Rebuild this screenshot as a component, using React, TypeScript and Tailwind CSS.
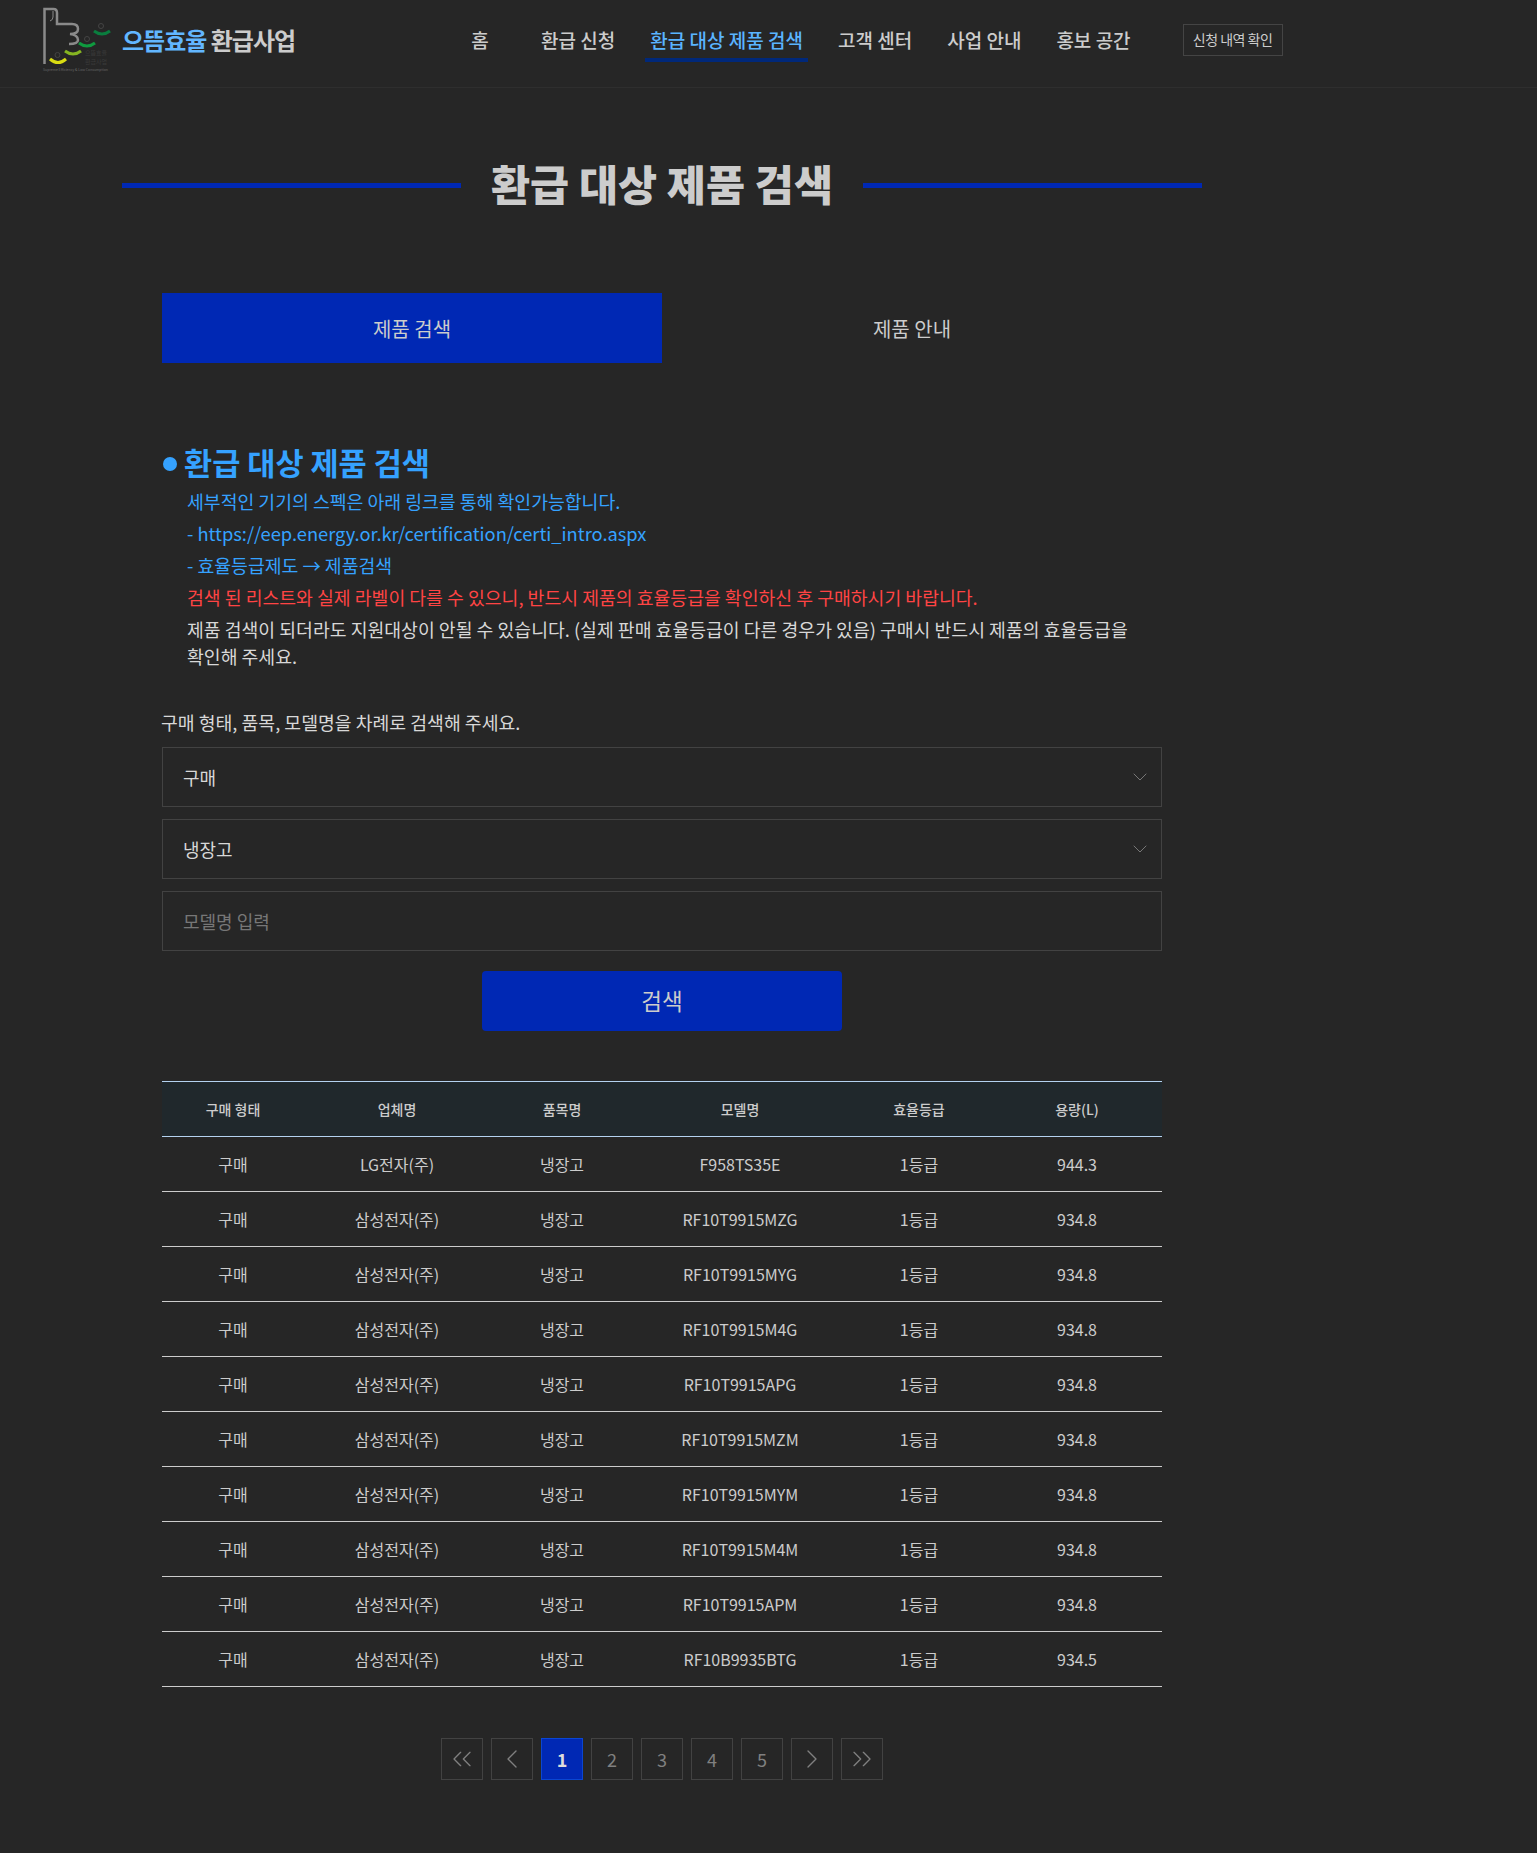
import React from 'react';
import { ChevronDown, ChevronLeft, ChevronRight, ChevronsLeft, ChevronsRight } from 'lucide-react';

const navItems = ['환급 신청', '환급 대상 제품 검색', '고객 센터', '사업 안내', '홍보 공간'];

const rows = [
  ['LG전자(주)', 'F958TS35E', '944.3'],
  ['삼성전자(주)', 'RF10T9915MZG', '934.8'],
  ['삼성전자(주)', 'RF10T9915MYG', '934.8'],
  ['삼성전자(주)', 'RF10T9915M4G', '934.8'],
  ['삼성전자(주)', 'RF10T9915APG', '934.8'],
  ['삼성전자(주)', 'RF10T9915MZM', '934.8'],
  ['삼성전자(주)', 'RF10T9915MYM', '934.8'],
  ['삼성전자(주)', 'RF10T9915M4M', '934.8'],
  ['삼성전자(주)', 'RF10T9915APM', '934.8'],
  ['삼성전자(주)', 'RF10B9935BTG', '934.5'],
];

const Logo = () => (
  <svg width="72" height="68" viewBox="40 6 72 68" fill="none" className="shrink-0">
    <path d="M43.500 64V9h9q3.500 0 3.500 4v11h15q6 0 6 5 0 5-8 5 8 1 8 6 0 4-9 4" stroke="#8a8a8a" strokeWidth="2.500" />
    <path d="M52 11v6q0 3-3 4" stroke="#8a8a8a" strokeWidth="1" />
    <path d="M49 59q8 7 16 0" stroke="#d9dc12" strokeWidth="3" />
    <path d="M64 51q8 6 16 0" stroke="#86b522" strokeWidth="3" />
    <path d="M78 43q8 6 16 0" stroke="#0f9a3f" strokeWidth="3" />
    <path d="M93 31q8 6 16 0" stroke="#0a7d3e" strokeWidth="3" />
    <circle cx="56.500" cy="55" r="2.500" stroke="#444" />
    <circle cx="86" cy="39" r="2.500" stroke="#444" />
    <circle cx="100" cy="26" r="2.500" stroke="#444" />
    <text x="84" y="55" fontSize="6" fill="#3a3a3a">으뜸효율</text>
    <text x="84" y="64" fontSize="6" fill="#3a3a3a">환급사업</text>
    <text x="42" y="71" fontSize="3.500" fill="#666">Supreme Efficiency &amp; Low Consumption</text>
  </svg>
);

const SelectBox = ({ label }: { label: string }) => (
  <div className="relative h-[60px] border border-[#424242] flex items-center pl-5 text-[18px] text-[#d8d8d8]">
    {label}
    <ChevronDown className="absolute right-[9px] top-[17px] text-[#777]" size={24} strokeWidth={1} />
  </div>
);

const PageBtn = ({ children, active }: { children: React.ReactNode; active?: boolean }) => (
  <button
    className={
      active
        ? 'w-[42px] h-[42px] flex items-center justify-center border border-[#0a46d2] bg-[#0028b4] text-[#dcdcdc] text-[18px] font-bold'
        : 'w-[42px] h-[42px] flex items-center justify-center border border-[#424242] text-[#808080] text-[18px]'
    }
  >
    {children}
  </button>
);

export default function App() {
  return (
    <div className="bg-[#262626] min-h-[1853px] font-['Noto_Sans_CJK_KR','Noto_Sans',sans-serif] text-[#cccccc]">
      <header className="h-[88px] pb-2 border-b border-[#2e2e2e] flex items-center">
        <div className="ml-[41px] flex items-center">
          <Logo />
          <span className="ml-[9px] text-[24px] font-bold tracking-[-1px]">
            <span className="text-[#62b6ff]">으뜸효율</span> 환급사업
          </span>
        </div>
        <nav className="ml-[154px] flex items-center gap-[25px] text-[19px] font-medium">
          <a className="w-[62px] text-center h-[44px] leading-[44px]">홈</a>
          {navItems.map((item, i) => (
            <a
              key={item}
              className={
                i === 1
                  ? 'px-[5px] h-[44px] leading-[44px] border-b-[4px] border-[#00287a] text-[#5ab4ff]'
                  : 'px-[5px] h-[44px] leading-[44px] border-b-[4px] border-transparent'
              }
            >
              {item}
            </a>
          ))}
        </nav>
        <button className="ml-[47px] w-[100px] h-8 border border-[#444444] text-[14px] tracking-[-0.5px]">신청 내역 확인</button>
      </header>

      <main className="w-[1324px]">
        <div className="mt-[67px] mx-auto w-[1080px] flex items-center gap-[30px]">
          <div className="flex-1 h-[5px] bg-[#0028b4]" />
          <h1 className="text-[42.5px] leading-[60px] -mt-[2px] mb-[2px] font-black">환급 대상 제품 검색</h1>
          <div className="flex-1 h-[5px] bg-[#0028b4]" />
        </div>

        <div className="mx-auto w-[1000px]">
          <div className="mt-[78px] grid grid-cols-2 h-[70px] text-[20px]">
            <div className="bg-[#0028b4] flex items-center justify-center pt-[2px]">제품 검색</div>
            <div className="flex items-center justify-center pt-[2px]">제품 안내</div>
          </div>

          <h2 className="mt-[81px] flex items-center text-[30.6px] leading-[40px] font-bold text-[#35a2ff]">
            <span className="w-[14px] h-[14px] rounded-full bg-[#35a2ff] mr-[7px] ml-px" />
            <span className="-mt-[2px] mb-[2px]">환급 대상 제품 검색</span>
          </h2>

          <div className="mt-1 pl-[25px] text-[18.3px] leading-[27px] break-keep">
            <p className="mb-[5px] text-[#35a2ff]">세부적인 기기의 스펙은 아래 링크를 통해 확인가능합니다.</p>
            <p className="mb-[5px] text-[#35a2ff]">- https://eep.energy.or.kr/certification/certi_intro.aspx</p>
            <p className="mb-[5px] text-[#35a2ff]">- 효율등급제도 → 제품검색</p>
            <p className="mb-[5px] text-[#ff4444]">검색 된 리스트와 실제 라벨이 다를 수 있으니, 반드시 제품의 효율등급을 확인하신 후 구매하시기 바랍니다.</p>
            <p className="text-[#d8d8d8]">제품 검색이 되더라도 지원대상이 안될 수 있습니다. (실제 판매 효율등급이 다른 경우가 있음) 구매시 반드시 제품의 효율등급을 확인해 주세요.</p>
          </div>

          <p className="mt-[39px] -ml-px text-[18.3px] leading-[27px] text-[#d8d8d8]">구매 형태, 품목, 모델명을 차례로 검색해 주세요.</p>

          <div className="mt-[11px] flex flex-col gap-3">
            <SelectBox label="구매" />
            <SelectBox label="냉장고" />
            <input
              placeholder="모델명 입력"
              className="h-[60px] border border-[#424242] pl-5 text-[18px] bg-transparent outline-none placeholder:text-[#777]"
            />
          </div>

          <button className="block mx-auto mt-5 w-[360px] h-[60px] rounded bg-[#0028b4] text-[22.5px]">검색</button>

          <table className="mt-[50px] w-full table-fixed border-collapse text-center">
            <colgroup>
              <col className="w-[142px]" />
              <col className="w-[186px]" />
              <col className="w-[144px]" />
              <col className="w-[212px]" />
              <col className="w-[146px]" />
              <col className="w-[170px]" />
            </colgroup>
            <thead>
              <tr className="h-[55px] bg-[#20282c] border-y border-[#b4d2f0] text-[14px]">
                <th className="font-medium">구매 형태</th>
                <th className="font-medium">업체명</th>
                <th className="font-medium">품목명</th>
                <th className="font-medium">모델명</th>
                <th className="font-medium">효율등급</th>
                <th className="font-medium">용량(L)</th>
              </tr>
            </thead>
            <tbody className="text-[16px]">
              {rows.map((r) => (
                <tr key={r[1]} className="h-[55px] border-b border-[#cccccc]">
                  <td>구매</td>
                  <td>{r[0]}</td>
                  <td>냉장고</td>
                  <td>{r[1]}</td>
                  <td>1등급</td>
                  <td>{r[2]}</td>
                </tr>
              ))}
            </tbody>
          </table>

          <div className="mt-[51px] flex justify-center gap-2">
            <PageBtn><ChevronsLeft size={32} strokeWidth={1} /></PageBtn>
            <PageBtn><ChevronLeft size={32} strokeWidth={1} /></PageBtn>
            <PageBtn active>1</PageBtn>
            <PageBtn>2</PageBtn>
            <PageBtn>3</PageBtn>
            <PageBtn>4</PageBtn>
            <PageBtn>5</PageBtn>
            <PageBtn><ChevronRight size={32} strokeWidth={1} /></PageBtn>
            <PageBtn><ChevronsRight size={32} strokeWidth={1} /></PageBtn>
          </div>
        </div>
      </main>
    </div>
  );
}
